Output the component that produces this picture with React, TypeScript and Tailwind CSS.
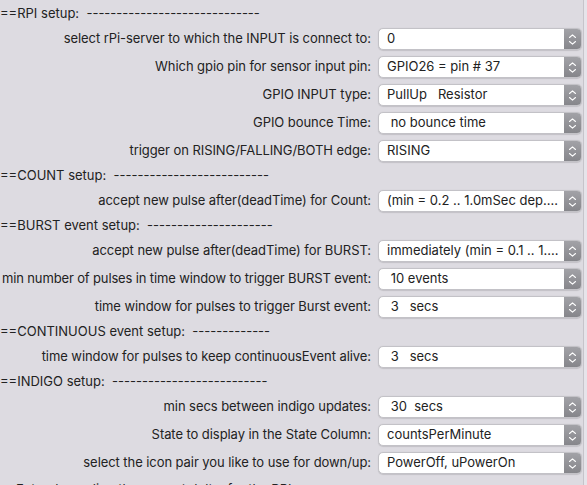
import React from 'react'

type Row =
  | { kind: 'header'; text: string }
  | { kind: 'select'; label: string; value: string; tight?: boolean }

const rows: Row[] = [
  { kind: 'header', text: '==RPI setup:  -----------------------------' },
  { kind: 'select', label: 'select rPi-server to which the INPUT is connect to:', value: '0' },
  { kind: 'select', label: 'Which gpio pin for sensor input pin:', value: 'GPIO26 = pin # 37' },
  { kind: 'select', label: 'GPIO INPUT type:', value: 'PullUp   Resistor' },
  { kind: 'select', label: 'GPIO bounce Time:', value: ' no bounce time' },
  { kind: 'select', label: 'trigger on RISING/FALLING/BOTH edge:', value: 'RISING' },
  { kind: 'header', text: '==COUNT setup:  --------------------------' },
  { kind: 'select', label: 'accept new pulse after(deadTime) for Count:', value: '(min = 0.2 .. 1.0mSec dep....' },
  { kind: 'header', text: '==BURST event setup:  ---------------------' },
  { kind: 'select', label: 'accept new pulse after(deadTime) for BURST:', value: 'immediately (min = 0.1 .. 1....' },
  { kind: 'select', label: 'min number of pulses in time window to trigger BURST event:', value: ' 10 events', tight: true },
  { kind: 'select', label: 'time window for pulses to trigger Burst event:', value: ' 3   secs' },
  { kind: 'header', text: '==CONTINUOUS event setup:  -------------' },
  { kind: 'select', label: 'time window for pulses to keep continuousEvent alive:', value: ' 3   secs' },
  { kind: 'header', text: '==INDIGO setup:  --------------------------' },
  { kind: 'select', label: 'min secs between indigo updates:', value: ' 30  secs' },
  { kind: 'select', label: 'State to display in the State Column:', value: 'countsPerMinute' },
  { kind: 'select', label: 'select the icon pair you like to use for down/up:', value: 'PowerOff, uPowerOn' },
]

function Stepper() {
  return (
    <div className="flex h-full w-[17px] shrink-0 items-center justify-center rounded-r-[4px] bg-gradient-to-b from-[#a2a2a7] to-[#86868b]">
      <svg width="9" height="13" viewBox="0 0 9 13" fill="none">
        <path d="M1.5 4.5 L4.5 1.8 L7.5 4.5" stroke="white" strokeWidth="1.1" strokeLinecap="round" strokeLinejoin="round" />
        <path d="M1.5 8.5 L4.5 11.2 L7.5 8.5" stroke="white" strokeWidth="1.1" strokeLinecap="round" strokeLinejoin="round" />
      </svg>
    </div>
  )
}

function SelectBox({ value }: { value: string }) {
  return (
    <div className="flex h-[22px] w-[204px] shrink-0 items-stretch rounded-[5px] border border-[#c3c2c7] bg-white shadow-[0_0.5px_1px_rgba(0,0,0,0.12)]">
      <div className="flex min-w-0 flex-1 items-center overflow-hidden whitespace-pre pl-[8px] text-[13px] text-[#222]">
        {value}
      </div>
      <Stepper />
    </div>
  )
}

export default function App() {
  return (
    <div
      className="flex h-[485px] w-[587px] overflow-hidden bg-[#dddbe1] text-[#222]"
      style={{ fontFamily: 'Inter, "Liberation Sans", sans-serif' }}
    >
      <div className="flex w-[584px] flex-col border-r border-[#c6c4ca] pt-[3px] pr-[1px]">
        {rows.map((row, i) =>
          row.kind === 'header' ? (
            <div key={i} className="flex h-[22px] shrink-0 items-center whitespace-pre text-[13px]">
              {row.text}
            </div>
          ) : (
            <div key={i} className="flex h-[28px] shrink-0 items-center">
              <div className="flex min-w-0 flex-1 justify-end pr-[7px]">
                <span
                  className={
                    row.tight
                      ? 'shrink-0 whitespace-nowrap text-[13px] tracking-[-0.14px]'
                      : 'shrink-0 whitespace-nowrap text-[13px] tracking-[-0.07px]'
                  }
                >
                  {row.label}
                </span>
              </div>
              <SelectBox value={row.value} />
            </div>
          )
        )}
        <div className="flex h-[25px] shrink-0 items-center whitespace-pre pl-[16px] text-[13px]">
          Extend  sending the current delta  for the RPI
        </div>
      </div>
      <div className="flex-1 bg-[#e6e4ea]" />
    </div>
  )
}
